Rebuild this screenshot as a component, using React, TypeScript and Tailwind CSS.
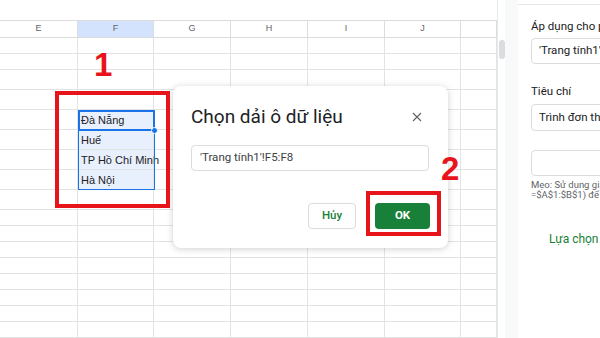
import React from 'react';

const columns = [
  { name: 'E', w: 78 },
  { name: 'F', w: 76 },
  { name: 'G', w: 77 },
  { name: 'H', w: 77 },
  { name: 'I', w: 77 },
  { name: 'J', w: 76 },
  { name: '', w: 36 },
];

const rowHeights = [16, 16, 20, 20, 20, 20, 20, 20, 20, 16, 16, 16, 16, 16, 16, 16, 16];

const cityCells: Record<number, string> = {
  4: 'Đà Nẵng',
  5: 'Huế',
  6: 'TP Hồ Chí Minh',
  7: 'Hà Nội',
};

const Sheet: React.FC = () => {
  return (
    <div className="relative flex w-[505px] shrink-0">
      <div className="flex w-[497px] flex-col">
        <div className="h-[20px]" />
        <div className="flex h-[18px] border-y border-[#dcdcdc]">
          {columns.map((c) => (
            <div
              key={c.name || 'end'}
              style={{ width: c.w }}
              className={`flex shrink-0 items-center justify-center border-r border-[#dcdcdc] text-[9px] text-[#5f6368] ${
                c.name === 'F' ? 'bg-[#d3e3fd] text-[#1f1f1f]' : ''
              }`}
            >
              {c.name}
            </div>
          ))}
        </div>
        {rowHeights.map((h, r) => (
          <div key={r} style={{ height: h }} className="flex shrink-0">
            {columns.map((c, ci) => {
              const inRange = ci === 1 && cityCells[r] !== undefined;
              return (
                <div
                  key={ci}
                  style={{ width: c.w }}
                  className={`flex shrink-0 items-center overflow-visible whitespace-nowrap border-b border-r border-[#e2e3e3] pl-[3px] pt-[1px] text-[11px] text-[#222] ${
                    inRange ? 'bg-[#e8f0fe]' : ''
                  }`}
                >
                  {ci === 1 ? cityCells[r] : ''}
                </div>
              );
            })}
          </div>
        ))}
      </div>
      {/* scrollbar */}
      <div className="flex w-[8px] flex-col items-center border-l border-[#e8e8e8] bg-white pt-[40px]">
        <div className="h-[19px] w-[6px] rounded-full bg-[#dadce0]" />
      </div>

      {/* selected range */}
      <div className="pointer-events-none absolute left-[78px] top-[110px] h-[80px] w-[77px] border border-[#1a73e8]" />
      <div className="pointer-events-none absolute left-[78px] top-[110px] h-[21px] w-[77px] border-2 border-[#1a73e8]" />
      <div className="absolute left-[151px] top-[127px] h-[7px] w-[7px] rounded-full border border-white bg-[#1a73e8]" />
    </div>
  );
};

const Dialog: React.FC = () => (
  <div className="absolute left-[173px] top-[86px] flex h-[162px] w-[275px] flex-col rounded-[8px] bg-white px-[18px] pt-[17px] shadow-[0_1px_6px_rgba(60,64,67,0.25)]">
    <div className="flex items-center justify-between">
      <span className="font-['Roboto',sans-serif] text-[19px] leading-[28px] text-[#202124]">
        Chọn dải ô dữ liệu
      </span>
      <svg width="10" height="10" viewBox="0 0 10 10" className="mr-[8px]">
        <path d="M1 1L9 9M9 1L1 9" stroke="#5f6368" strokeWidth="1.1" />
      </svg>
    </div>
    <div className="mt-[14px] flex h-[26px] w-[238px] items-center rounded-[4px] border border-[#dadce0] pl-[8px] font-['Roboto',sans-serif] text-[11.5px] text-[#3c4043]">
      'Trang tính1'!F5:F8
    </div>
    <div className="mt-[32px] flex justify-end gap-[19px]">
      <div className="flex h-[26px] w-[48px] items-center justify-center rounded-[4px] border border-[#dadce0] font-['Roboto',sans-serif] text-[11.5px] font-medium text-[#188038]">
        Hủy
      </div>
      <div className="flex h-[26px] w-[55px] items-center justify-center rounded-[4px] bg-[#188038] font-['Roboto',sans-serif] text-[11.5px] font-bold text-white">
        OK
      </div>
    </div>
  </div>
);

const SidePanel: React.FC = () => (
  <div className="flex flex-1 font-['Roboto',sans-serif]">
    <div className="w-[13px] shrink-0 bg-[#f8f9fa]" />
    <div className="flex flex-1 flex-col overflow-hidden whitespace-nowrap">
      <div className="h-[5px] border-b border-[#e6e6e6]" />
      <div className="pl-[13px]">
        <div className="mt-[13px] text-[11.5px] leading-[16px] text-[#202124]">Áp dụng cho phạm vi</div>
        <div className="mt-[4px] flex h-[26px] w-[120px] items-center rounded-[4px] border border-[#dadce0] pl-[7px] text-[11.5px] text-[#202124]">
          'Trang tính1'!C1:C10
        </div>
        <div className="mt-[19px] text-[11.5px] leading-[16px] text-[#202124]">Tiêu chí</div>
        <div className="mt-[5px] flex h-[27px] w-[120px] items-center rounded-[4px] border border-[#dadce0] pl-[7px] text-[11.5px] text-[#202124]">
          Trình đơn thả xuống (từ một dải ô)
        </div>
        <div className="mt-[19px] h-[26px] w-[120px] rounded-[4px] border border-[#dadce0]" />
        <div className="mt-[4px] text-[9.5px] leading-[10px] text-[#5f6368]">
          <div>Mẹo: Sử dụng giá trị tuyệt đối (ví dụ:</div>
          <div>=$A$1:$B$1) để khóa dải ô</div>
        </div>
        <div className="mt-[30px] pl-[18px] text-[12px] text-[#188038]">Lựa chọn</div>
      </div>
    </div>
  </div>
);

export default function App() {
  return (
    <div className="relative flex h-[338px] w-[600px] overflow-hidden bg-white font-['Liberation_Sans',Arial,sans-serif]">
      <Sheet />
      <SidePanel />
      <Dialog />

      {/* annotations */}
      <div className="absolute left-[55px] top-[91px] h-[117px] w-[115px] border-[4px] border-[#e8141c]" />
      <div className="absolute left-[94px] top-[45px] text-[33px] font-bold leading-[40px] text-[#e8141c]">1</div>
      <div className="absolute left-[366px] top-[191px] h-[45px] w-[75px] border-[4px] border-[#e8141c]" />
      <div className="absolute left-[441px] top-[149px] text-[33px] font-bold leading-[40px] text-[#e8141c]">2</div>
    </div>
  );
}
